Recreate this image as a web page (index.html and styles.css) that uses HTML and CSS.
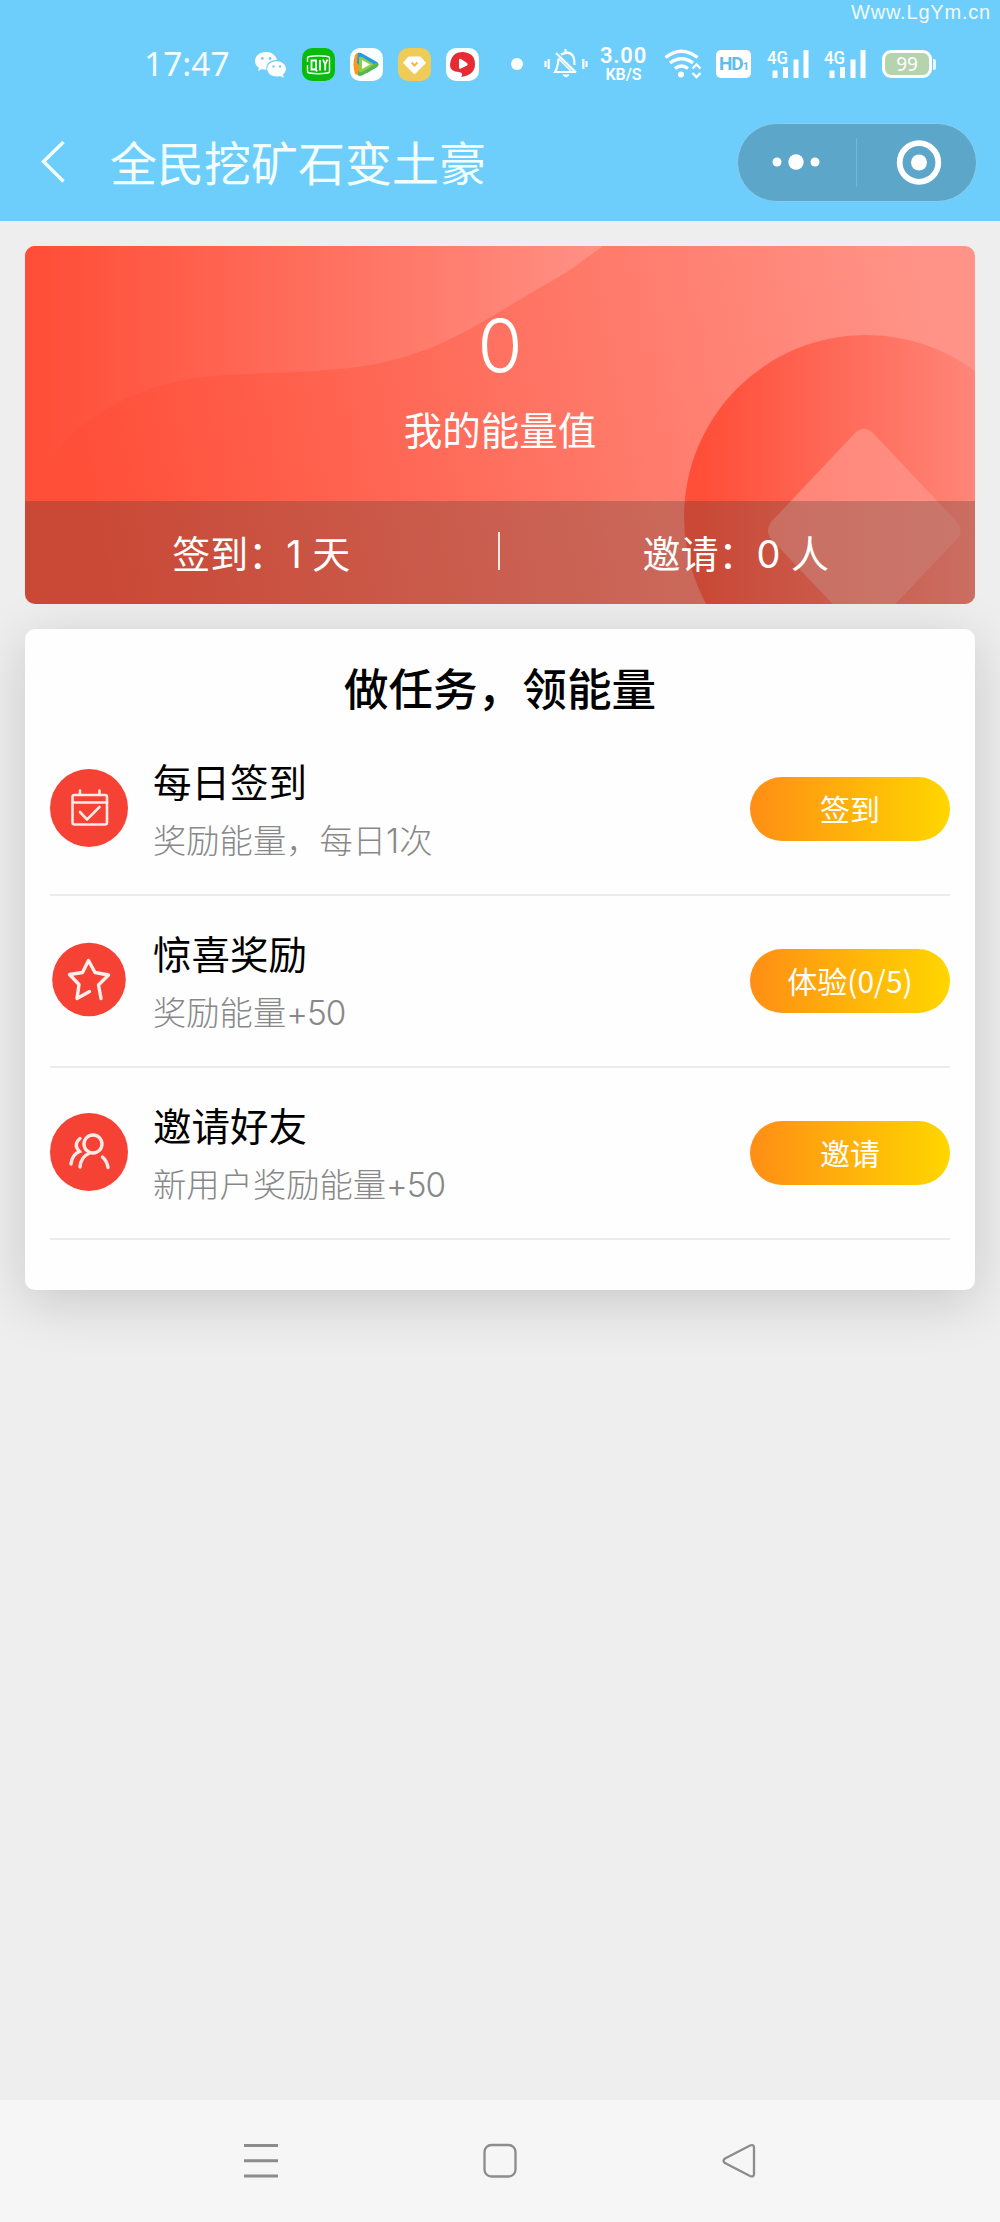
FILE: index.html
```html
<!DOCTYPE html>
<html lang="zh-CN">
<head>
<meta charset="utf-8">
<title>全民挖矿石变土豪</title>
<link rel="stylesheet" href="styles.css">
</head>
<body>
<div class="watermark">Www.LgYm.cn</div>
<header class="top">
  <div class="status">
    <span class="time">17:47</span>
    <div class="apps">
      <svg width="33" height="33" viewBox="0 0 33 33"><path fill="#fff" d="M12 4C5.500 4 1 8 1 13c0 3 1.500 5.200 4 6.800L4 23l4-2c1.500.5 3 .7 4.500.6C11.500 15.500 16.500 11.500 23 12 22 7.500 17.500 4 12 4z"/><path fill="#fff" d="M22.500 13.200c-5.300 0-9.300 3.300-9.300 7.600s4 7.700 9.300 7.700c1.300 0 2.500-.2 3.600-.6l3.700 1.900-.9-3.300c2-1.500 3.100-3.500 3.100-5.700 0-4.300-4.200-7.600-9.500-7.600z"/><g fill="#6fcdfb"><circle cx="8.300" cy="10.500" r="1.400"/><circle cx="16" cy="10.500" r="1.400"/><circle cx="19.500" cy="18.500" r="1.200"/><circle cx="26" cy="18.500" r="1.200"/></g></svg>
      <svg width="33" height="33" viewBox="0 0 33 33"><rect width="33" height="33" rx="10" fill="#08bd0a"/><path d="M5.500 14V10.500q0-2 2-2 9-1.500 18 0 2 0 2 2v12.500q0 2-2 2-9 1.500-18 0-2 0-2-2v-6" fill="none" stroke="#fff" stroke-width="1.400"/><path d="M9.500 12.500h4.500v9H9.500zM13 20l2 3.500M18 12v10.500M21 11.500l2.200 5 2.200-5M23.200 16.500v6" fill="none" stroke="#fff" stroke-width="1.800"/></svg>
      <svg width="33" height="33" viewBox="0 0 33 33"><rect width="33" height="33" rx="10" fill="#fcffff"/><path d="M5 7q-3 9.500 0 19l5 2V5q-3-1-5 2z" fill="#f89a20"/><path d="M8 5q2-1 5 1l14 8q3 2.500 0 5l-10 6L7 15z" fill="#2497e8"/><path d="M8 27q1 2 5 0l14-8q2-1.500 1-4l-11 1-9 7z" fill="#57b847"/><path d="M9 10q0-2 3-1l10 6q2 1.500 0 3l-10 6q-3 1-3-1z" fill="#8bd04d"/><path d="M12 12l8 4.500-8 4.500z" fill="#fff"/></svg>
      <svg width="33" height="33" viewBox="0 0 33 33"><rect width="33" height="33" rx="10" fill="#efcb57"/><path d="M10.500 9h12l5 6L16.500 26 5.500 15z" fill="#fff" stroke="#fff" stroke-linejoin="round"/><path d="M13.500 14.500l3 3 3-3" fill="none" stroke="#e8be3e" stroke-width="2"/></svg>
      <svg width="33" height="33" viewBox="0 0 33 33"><rect width="33" height="33" rx="10" fill="#fcffff"/><path d="M15 29q3-4-2-5Q4 24 4 17q1-13 13-13 12 1 12 12T15 29z" fill="#e62b35"/><path d="M13 12q0-2 2-1l6 4q1.500 1.300 0 2.500l-6 3q-2 .7-2-1z" fill="#fff"/></svg>
    </div>
    <span class="dot"></span>
    <svg class="bell" width="44" height="30" viewBox="0 0 44 30" fill="none" stroke="#fff" stroke-width="2.200"><path d="M1.500 12v6M4.700 10v10M39.300 10v10M42.500 12v6M21.500 0v4M17 5.500q9-4.500 12.500 2.500 1 3 1 8M12 4l20 19.500M14.500 9.500Q14 18 11 23h20.500"/><path d="M14.500 9.500L27 22" stroke-width="1.500"/><path d="M19 26h6l-3 2z" fill="#fff" stroke-width="1"/></svg>
    <div class="speed"><span>3.00</span><small>KB/S</small></div>
    <svg class="wifi" width="38" height="30" viewBox="0 0 38 30" fill="none" stroke="#fff" stroke-width="3.400"><path d="M1.500 8.500Q17.500-4 33.500 8.500M6 14q11.500-8.500 23 0M11 19.500q6.500-5 13 0"/><circle cx="17" cy="25.500" r="3" fill="#fff" stroke="none"/><path d="M28.500 19.500l4-4 4 4M28.500 24l4 4 4-4" stroke-width="2.400"/></svg>
    <span class="hd"><span>HD</span><small>1</small></span>
    <svg class="sig first" width="42" height="30" viewBox="0 0 42 30" fill="#fff"><text x="0" y="15" font-size="18" textLength="21" lengthAdjust="spacingAndGlyphs">4G</text><path d="M5.500 21.500h5V29h-5zM16 18h5v11h-5zM26.500 10.500h5V29h-5zM36.500 1h5v28h-5z"/></svg>
    <svg class="sig" width="42" height="30" viewBox="0 0 42 30" fill="#fff"><text x="0" y="15" font-size="18" textLength="21" lengthAdjust="spacingAndGlyphs">4G</text><path d="M5.500 21.500h5V29h-5zM16 18h5v11h-5zM26.500 10.500h5V29h-5zM36.500 1h5v28h-5z"/></svg>
    <span class="battery">99</span><span class="battery-tip"></span>
  </div>
  <nav class="nav">
    <svg class="back" width="24" height="42" viewBox="0 0 24 42"><path d="M22.500 1L2.500 20.500l20 20" fill="none" stroke="#f3ffff" stroke-width="3.400"/></svg>
    <h1>全民挖矿石变土豪</h1>
    <div class="capsule">
      <svg width="118" height="76" viewBox="0 0 118 76" fill="#fff"><circle cx="39" cy="38" r="4.500"/><circle cx="58" cy="38" r="7.700"/><circle cx="77" cy="38" r="4.500"/></svg>
      <i></i>
      <svg width="119" height="76" viewBox="0 0 119 76"><circle cx="62" cy="38.500" r="19.300" fill="none" stroke="#fff" stroke-width="5.800"/><circle cx="62" cy="38.500" r="8" fill="#fff"/></svg>
    </div>
  </nav>
</header>
<main>
  <section class="energy">
    <svg class="art" width="950" height="358" viewBox="0 0 950 358">
      <defs>
        <linearGradient id="bg" gradientUnits="userSpaceOnUse" x1="60" y1="230" x2="900" y2="60"><stop stop-color="#ff4f39"/><stop offset="1" stop-color="#ff9387"/></linearGradient>
        <linearGradient id="wave" gradientUnits="userSpaceOnUse" x1="20" y1="0" x2="590" y2="0"><stop stop-color="#ff4f39"/><stop offset="1" stop-color="#ff9286"/></linearGradient>
        <linearGradient id="coin" gradientUnits="userSpaceOnUse" x1="680" y1="0" x2="975" y2="0"><stop stop-color="#ff4f39"/><stop offset="1" stop-color="#ff8a7e"/></linearGradient>
        <linearGradient id="gem" gradientUnits="userSpaceOnUse" x1="740" y1="0" x2="940" y2="0"><stop stop-color="#ff8477"/><stop offset="1" stop-color="#ff9185"/></linearGradient>
      </defs>
      <rect width="950" height="358" fill="url(#bg)"/>
      <path d="M0 0H578C550 20 545 25 523 37C470 67 430 97 375 112C320 128 260 125 198 129C120 136 90 156 51 184C25 205 15 240 0 260z" fill="url(#wave)"/>
      <circle cx="841" cy="271" r="182" fill="url(#coin)"/>
      <path d="M831 186q8-7 16 0l84 89q9 10 0 19l-92 97-92-97q-8-9 0-19z" fill="url(#gem)"/>
    </svg>
    <div class="total"><strong>0</strong><span>我的能量值</span></div>
    <div class="stats"><span>签到：1 天</span><i></i><span>邀请：0 人</span></div>
  </section>
  <section class="tasks">
    <h2>做任务，领能量</h2>
    <div class="task">
      <svg width="78" height="78" viewBox="0 0 78 78" fill="none" stroke="#ffe9e4" stroke-width="2.600" stroke-linecap="round" stroke-linejoin="round"><circle cx="39" cy="39" r="39" fill="#f64135" stroke="none"/><rect x="22.500" y="26" width="34.500" height="29.500" rx="2"/><path d="M23 33.500h34M30 21.500v4M49.500 21.500v4M30 43l7 7.500 12.500-12.500"/></svg>
      <div class="info"><b>每日签到</b><span>奖励能量，每日1次</span></div>
      <button>签到</button>
    </div>
    <div class="task">
      <svg width="78" height="78" viewBox="0 0 78 78" fill="none" stroke="#fff0ec" stroke-width="3.400" stroke-linecap="round" stroke-linejoin="round"><circle cx="39" cy="38.500" r="36.800" fill="#f64135" stroke="none"/><path d="M39.500 50.500L27 57.500 29 43.500 19.500 33.500 32.500 31.500 38.500 19.500 45 31.500 58.500 34 48.500 44 51 57.500"/></svg>
      <div class="info"><b>惊喜奖励</b><span>奖励能量<em>+50</em></span></div>
      <button>体验(0/5)</button>
    </div>
    <div class="task">
      <svg width="78" height="78" viewBox="0 0 78 78" fill="none" stroke="#ffe9e4" stroke-width="3.400" stroke-linecap="round"><circle cx="39" cy="39" r="39" fill="#f64135" stroke="none"/><circle cx="43" cy="31" r="9"/><path d="M30 54Q31 43.500 39 40.500M52.500 44q4.500 4 5.500 10.500M30 25.500q-6 5-2.500 10.500l2 2.500q-7.500 3-8.500 12.500"/></svg>
      <div class="info"><b>邀请好友</b><span>新用户奖励能量<em>+50</em></span></div>
      <button>邀请</button>
    </div>
  </section>
</main>
<footer class="sysnav">
  <svg width="36" height="36" viewBox="0 0 36 36" fill="none" stroke="#8c8c8c" stroke-width="3"><path d="M1 2.500h34M1 17.700h34M1 33h34"/></svg>
  <svg width="36" height="36" viewBox="0 0 36 36" fill="none" stroke="#8c8c8c" stroke-width="2.300"><rect x="2.500" y="2" width="31" height="31.500" rx="7"/></svg>
  <svg width="36" height="36" viewBox="0 0 36 36" fill="none" stroke="#8c8c8c" stroke-width="2.300"><path d="M4 15.500L29 2.500q4-1.500 4 2v26.500q0 3.500-4 2L4 20q-3-2.200 0-4.500z"/></svg>
</footer>
</body>
</html>
```
FILE: styles.css
```css
* { box-sizing: border-box; }
body {
  margin: 0;
  width: 1000px;
  height: 2222px;
  display: flex;
  flex-direction: column;
  background: #eee;
  font-family: "Noto Sans CJK SC", "Noto Sans", sans-serif;
  position: relative;
  overflow: hidden;
}
svg { display: block; flex: none; }
h1, h2 { margin: 0; }

.watermark {
  position: absolute;
  right: 9px;
  top: 1px;
  font: 20px/22px "Liberation Sans", sans-serif;
  letter-spacing: .8px;
  color: #f0fbff;
}

.top { height: 221px; background: #6dcefc; color: #fff; }
.status { height: 103px; padding: 25px 0 0 144px; display: flex; align-items: center; }
.time { width: 110px; margin-top: -2px; font: 33.500px/40px "Noto Sans", sans-serif; color: #f3fdff; }
.apps { display: flex; gap: 15px; }
.dot { width: 12px; height: 12px; border-radius: 50%; background: #fff; margin-left: 32px; }
.bell { margin-left: 21px; }
.speed {
  width: 49px;
  margin-left: 11px;
  display: flex;
  flex-direction: column;
  align-items: center;
  font: 600 22px/20px "Roboto", sans-serif;
  letter-spacing: .8px;
}
.speed small { font-size: 16px; line-height: 17px; letter-spacing: 0; }
.wifi { margin-left: 16px; }
.hd {
  width: 35px;
  height: 28px;
  margin-left: 14px;
  border-radius: 5px;
  background: #fff;
  color: #62bce8;
  display: flex;
  justify-content: center;
  align-items: baseline;
  font: 700 19px/28px "Roboto", sans-serif;
  letter-spacing: -1px;
}
.hd small { font-size: 11px; }
.sig { margin-left: 15px; font-family: "Roboto", sans-serif; font-weight: 500; overflow: visible; }
.sig.first { margin-left: 16px; }
.battery {
  width: 50px;
  height: 28px;
  margin-left: 16px;
  border: 3px solid #fff;
  border-radius: 9px;
  background: #b5d3ac;
  font: 19px/22px "Noto Sans", sans-serif;
  text-align: center;
}
.battery-tip { width: 3px; height: 11px; margin-left: 1px; background: #e7fbff; border-radius: 0 2px 2px 0; }

.nav { height: 118px; padding: 0 23px 0 41px; display: flex; align-items: center; }
.nav h1 { margin: -3px 0 0 45px; font-size: 47px; line-height: 60px; font-weight: 400; color: #f3ffff; }
.capsule {
  margin-left: auto;
  width: 240px;
  height: 79px;
  display: flex;
  align-items: center;
  border: 1.5px solid #88cdec;
  border-radius: 40px;
  background: #5ca6c9;
}
.capsule i { width: 1px; height: 49px; background: #73b8d8; }

main { flex: 1; padding: 25px; }
.energy {
  position: relative;
  height: 358px;
  border-radius: 10px;
  overflow: hidden;
  color: #fff;
  display: flex;
  flex-direction: column;
  font-family: "Inter", "Noto Sans CJK SC", sans-serif;
}
.art { position: absolute; left: 0; top: 0; }
.total, .stats { position: relative; }
.total { height: 255px; padding-top: 57px; display: flex; flex-direction: column; align-items: center; }
.total strong { font-size: 73px; line-height: 86px; font-weight: 300; }
.total span { font-size: 38.500px; line-height: 60px; margin-top: 12px; font-weight: 400; }
.stats {
  flex: 1;
  padding: 0 3px 3px 0;
  display: flex;
  align-items: center;
  background: rgba(80, 60, 50, .3);
  font-size: 38px;
  font-weight: 400;
}
.stats span { flex: 1; text-align: center; }
.stats i { width: 2px; height: 38px; background: #ffe9e4; }

.tasks {
  margin-top: 25px;
  height: 661px;
  padding: 0 25px;
  border-radius: 10px;
  background: #fefefe;
  box-shadow: 0 12px 55px rgba(0, 0, 0, .16);
}
.tasks h2 { height: 95px; padding-top: 25px; font-size: 44.600px; line-height: 66px; font-weight: 500; text-align: center; color: #000; }
.task { height: 172px; display: flex; align-items: center; border-bottom: 2px solid #ececec; }
.task svg { margin-top: -2px; }
.info { margin-left: 25px; padding-top: 4px; flex: 1; display: flex; flex-direction: column; }
.info b { font-size: 38.500px; line-height: 58px; font-weight: 400; color: #000; }
.info span { padding-top: 2px; font: 300 33.300px/60px "Inter", "Noto Sans CJK SC", sans-serif; color: #888; }
.info em { font-style: normal; letter-spacing: -1px; }
.task button {
  width: 200px;
  height: 64px;
  padding: 0 0 2px;
  border: 0;
  border-radius: 32px;
  background: linear-gradient(90deg, #ff8e15, #ffd600);
  color: #fff;
  font: 400 30px/60px "Noto Sans CJK SC", sans-serif;
}

.sysnav { height: 122px; padding: 0 243px; display: flex; justify-content: space-between; align-items: center; background: #f6f6f6; }
```
